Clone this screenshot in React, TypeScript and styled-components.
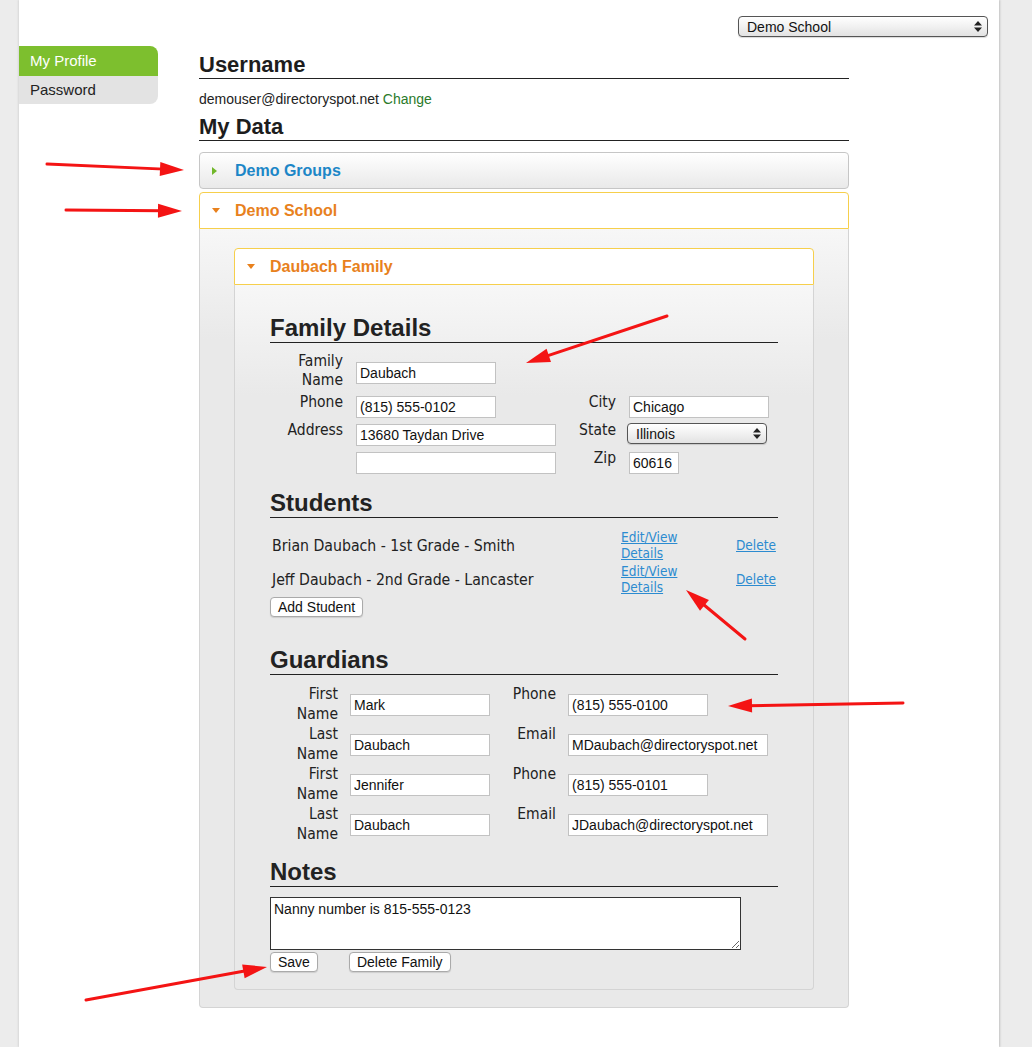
import styled, { createGlobalStyle } from 'styled-components';

const GlobalStyle = createGlobalStyle`
  body {
    margin: 0;
    background: #ececec;
    font-family: "Liberation Sans", Arial, sans-serif;
    color: #222;
  }
`;

const labelFont = `"DejaVu Sans Condensed", "DejaVu Sans", sans-serif`;

// page frame
const Page = styled.div`
  position: relative;
  margin-left: 19px;
  width: 980px;
  min-height: 1047px;
  background: #fff;
  box-shadow: 1px 0 2px rgba(0, 0, 0, 0.18), -1px 0 2px rgba(0, 0, 0, 0.08);
`;

const TopBar = styled.div`
  display: flex;
  justify-content: flex-end;
  box-sizing: border-box;
  height: 46px;
  padding: 16px 11px 0 0;
`;

const SelectWrap = styled.div<{ $width: number }>`
  position: relative;
  width: ${(p) => p.$width}px;
  height: 21px;
`;

const Select = styled.select`
  appearance: none;
  width: 100%;
  height: 100%;
  box-sizing: border-box;
  border: 1px solid #555;
  border-radius: 4px;
  background: linear-gradient(#ffffff, #f1f1f1 50%, #e2e2e2);
  font-family: "Liberation Sans", Arial, sans-serif;
  font-size: 14px;
  color: #111;
  padding: 0 20px 0 8px;
  box-shadow: 0 1px 1px rgba(0, 0, 0, 0.15);
`;

const SelectArrows = styled.svg`
  position: absolute;
  right: 6px;
  top: 5px;
  pointer-events: none;
`;

const Layout = styled.div`
  display: flex;
`;

const SideNav = styled.nav`
  flex: none;
  width: 139px;
  margin-right: 41px;
`;

const NavItem = styled.div<{ $active?: boolean }>`
  height: ${(p) => (p.$active ? 30 : 28)}px;
  line-height: ${(p) => (p.$active ? 30 : 28)}px;
  padding-left: 11px;
  font-size: 15px;
  color: ${(p) => (p.$active ? '#fff' : '#222')};
  background: ${(p) => (p.$active ? '#7dbf2e' : '#e3e3e3')};
  border-radius: ${(p) => (p.$active ? '0 8px 0 0' : '0 0 8px 0')};
`;

const Main = styled.main`
  width: 650px;
  padding-top: 6px;
`;

const PageTitle = styled.h2`
  margin: 0;
  font-size: 22px;
  line-height: 26px;
  font-weight: bold;
  color: #1d1d1d;
  border-bottom: 1px solid #222;
`;

const UserLine = styled.div`
  margin: 11px 0 6px;
  font-size: 14px;
  line-height: 18px;
`;

const GreenLink = styled.a`
  color: #2a7a2a;
  text-decoration: none;
`;

const AccHeader = styled.div<{ $open?: boolean }>`
  display: flex;
  align-items: center;
  box-sizing: border-box;
  height: 37px;
  padding-left: 12px;
  border: 1px solid ${(p) => (p.$open ? '#f6cf4c' : '#c6c6c6')};
  border-radius: ${(p) => (p.$open ? '4px 4px 0 0' : '4px')};
  background: ${(p) => (p.$open ? '#fff' : 'linear-gradient(#ffffff, #f4f4f4 50%, #e9e9e9)')};
  font-size: 16px;
  font-weight: bold;
  color: ${(p) => (p.$open ? '#e8811d' : '#1c86c7')};
  margin-top: ${(p) => (p.$open ? 3 : 11)}px;
`;

const Caret = styled.span`
  display: inline-flex;
  width: 23px;
`;

const AccPanel = styled.div<{ $pad: string }>`
  border: 1px solid #d4d4d4;
  border-top: 0;
  border-radius: 0 0 4px 4px;
  padding: ${(p) => p.$pad};
  background: linear-gradient(#f7f7f7, #e9e9e9 110px, #e9e9e9);
`;

const InnerHeader = styled(AccHeader)`
  margin-top: 0;
`;

const Section = styled.section<{ $gap: number }>`
  margin-top: ${(p) => p.$gap}px;
  &:first-child {
    margin-top: 0;
  }
`;

const SectionTitle = styled.h3`
  margin: 0;
  font-size: 24px;
  line-height: 28px;
  font-weight: bold;
  color: #222;
  border-bottom: 1px solid #222;
`;

const FamilyGrid = styled.div`
  display: grid;
  grid-template-columns: 73px 200px 47px 140px;
  column-gap: 13px;
  row-gap: 3px;
  margin-top: 9px;
`;

const GuardianGrid = styled.div`
  display: grid;
  grid-template-columns: 68px 140px 54px 200px;
  column-gap: 12px;
  grid-auto-rows: 40px;
  margin-top: 9px;
`;

const Label = styled.label<{ $lh: number }>`
  font-family: ${labelFont};
  font-stretch: condensed;
  font-size: 15.5px;
  line-height: ${(p) => p.$lh}px;
  color: #222;
  text-align: right;
`;

const TextInput = styled.input<{ $w: number; $top: number }>`
  display: block;
  box-sizing: border-box;
  width: ${(p) => p.$w}px;
  height: 22px;
  margin-top: ${(p) => p.$top}px;
  padding: 0 3px;
  border: 1px solid #c2c2c2;
  background: #fff;
  font-family: "Liberation Sans", Arial, sans-serif;
  font-size: 14px;
  color: #111;
`;

const StudentList = styled.div`
  display: grid;
  grid-template-columns: 351px 115px auto;
  grid-auto-rows: 32px;
  row-gap: 2px;
  align-items: center;
  margin-top: 11px;
`;

const StudentName = styled.span`
  padding-left: 2px;
  font-family: ${labelFont};
  font-stretch: condensed;
  font-size: 15.7px;
  color: #222;
`;

const BlueLink = styled.a<{ $w?: number }>`
  display: block;
  width: ${(p) => (p.$w ? `${p.$w}px` : 'auto')};
  font-family: ${labelFont};
  font-stretch: condensed;
  font-size: 13.5px;
  line-height: 16px;
  color: #2c8bd0;
  text-decoration: underline;
`;

const Button = styled.button`
  height: 20px;
  padding: 0 7px;
  border: 1px solid #aaa;
  border-radius: 4px;
  background: #fff;
  font-family: "Liberation Sans", Arial, sans-serif;
  font-size: 14px;
  color: #111;
  box-shadow: 0 1px 1px rgba(0, 0, 0, 0.12);
`;

const AddButton = styled(Button)`
  display: block;
  margin-top: 2px;
`;

const NotesArea = styled.textarea`
  display: block;
  box-sizing: border-box;
  width: 471px;
  height: 53px;
  margin-top: 10px;
  padding: 3px 3px;
  border: 1px solid #333;
  font-family: "Liberation Sans", Arial, sans-serif;
  font-size: 14px;
  color: #111;
`;

const ButtonRow = styled.div`
  display: flex;
  gap: 31px;
  margin-top: 2px;
`;

const Overlay = styled.svg`
  position: absolute;
  left: -19px;
  top: 0;
  pointer-events: none;
`;

function Arrow({ x1, y1, x2, y2 }: { x1: number; y1: number; x2: number; y2: number }) {
  const dx = x2 - x1;
  const dy = y2 - y1;
  const len = Math.hypot(dx, dy);
  const ux = dx / len;
  const uy = dy / len;
  const bx = x2 - ux * 24;
  const by = y2 - uy * 24;
  const nx = -uy * 7;
  const ny = ux * 7;
  return (
    <g fill="#f41414" stroke="#f41414">
      <line x1={x1} y1={y1} x2={bx + ux * 4} y2={by + uy * 4} strokeWidth={3} strokeLinecap="round" />
      <polygon points={`${x2},${y2} ${bx + nx},${by + ny} ${bx - nx},${by - ny}`} strokeWidth={0} />
    </g>
  );
}

const arrows = [
  { x1: 47, y1: 164, x2: 184, y2: 170 },
  { x1: 66, y1: 210, x2: 182, y2: 211 },
  { x1: 667, y1: 316, x2: 526, y2: 363 },
  { x1: 745, y1: 639, x2: 686, y2: 590 },
  { x1: 903, y1: 703, x2: 728, y2: 706 },
  { x1: 86, y1: 1000, x2: 267, y2: 967 },
];

function UpDown() {
  return (
    <SelectArrows width="8" height="11" viewBox="0 0 8 11">
      <path d="M4 0 L8 4.5 H0 Z M0 6.5 H8 L4 11 Z" fill="#222" />
    </SelectArrows>
  );
}

function Triangle({ open }: { open?: boolean }) {
  return open ? (
    <svg width="8" height="6" viewBox="0 0 8 6">
      <path d="M0 0 H8 L4 5 Z" fill="#e8811d" />
    </svg>
  ) : (
    <svg width="6" height="8" viewBox="0 0 6 8">
      <path d="M0 0 L5 4 L0 8 Z" fill="#71b72a" />
    </svg>
  );
}

const guardians = [
  { first: 'Mark', last: 'Daubach', phone: '(815) 555-0100', email: 'MDaubach@directoryspot.net' },
  { first: 'Jennifer', last: 'Daubach', phone: '(815) 555-0101', email: 'JDaubach@directoryspot.net' },
];

const students = ['Brian Daubach - 1st Grade - Smith', 'Jeff Daubach - 2nd Grade - Lancaster'];

export default function App() {
  return (
    <>
      <GlobalStyle />
      <Page>
        <TopBar>
          <SelectWrap $width={250}>
            <Select defaultValue="demo">
              <option value="demo">Demo School</option>
            </Select>
            <UpDown />
          </SelectWrap>
        </TopBar>
        <Layout>
          <SideNav>
            <NavItem $active>My Profile</NavItem>
            <NavItem>Password</NavItem>
          </SideNav>
          <Main>
            <PageTitle>Username</PageTitle>
            <UserLine>
              demouser@directoryspot.net <GreenLink href="#">Change</GreenLink>
            </UserLine>
            <PageTitle>My Data</PageTitle>

            <AccHeader>
              <Caret>
                <Triangle />
              </Caret>
              Demo Groups
            </AccHeader>
            <AccHeader $open>
              <Caret>
                <Triangle open />
              </Caret>
              Demo School
            </AccHeader>
            <AccPanel $pad="19px 34px 17px">
              <InnerHeader $open>
                <Caret>
                  <Triangle open />
                </Caret>
                Daubach Family
              </InnerHeader>
              <AccPanel $pad="29px 35px 17px">
                <Section $gap={0}>
                  <SectionTitle>Family Details</SectionTitle>
                  <FamilyGrid>
                    <Label $lh={19}>
                      Family
                      <br />
                      Name
                    </Label>
                    <TextInput $w={140} $top={10} defaultValue="Daubach" />
                    <span />
                    <span />

                    <Label $lh={19}>Phone</Label>
                    <TextInput $w={140} $top={3} defaultValue="(815) 555-0102" />
                    <Label $lh={19}>City</Label>
                    <TextInput $w={140} $top={3} defaultValue="Chicago" />

                    <Label $lh={19}>Address</Label>
                    <TextInput $w={200} $top={3} defaultValue="13680 Taydan Drive" />
                    <Label $lh={19}>State</Label>
                    <SelectWrap $width={140} style={{ marginTop: 2, marginLeft: -2 }}>
                      <Select defaultValue="IL">
                        <option value="IL">Illinois</option>
                      </Select>
                      <UpDown />
                    </SelectWrap>

                    <span />
                    <TextInput $w={200} $top={3} defaultValue="" />
                    <Label $lh={19}>Zip</Label>
                    <TextInput $w={50} $top={3} defaultValue="60616" />
                  </FamilyGrid>
                </Section>

                <Section $gap={15}>
                  <SectionTitle>Students</SectionTitle>
                  <StudentList>
                    {students.map((s) => (
                      <>
                        <StudentName key={s}>{s}</StudentName>
                        <BlueLink href="#" $w={62}>
                          Edit/View Details
                        </BlueLink>
                        <BlueLink href="#">Delete</BlueLink>
                      </>
                    ))}
                  </StudentList>
                  <AddButton>Add Student</AddButton>
                </Section>

                <Section $gap={29}>
                  <SectionTitle>Guardians</SectionTitle>
                  <GuardianGrid>
                    {guardians.map((g) => (
                      <>
                        <Label $lh={20}>
                          First
                          <br />
                          Name
                        </Label>
                        <TextInput $w={140} $top={10} defaultValue={g.first} />
                        <Label $lh={20}>Phone</Label>
                        <TextInput $w={140} $top={10} defaultValue={g.phone} />
                        <Label $lh={20}>
                          Last
                          <br />
                          Name
                        </Label>
                        <TextInput $w={140} $top={10} defaultValue={g.last} />
                        <Label $lh={20}>Email</Label>
                        <TextInput $w={200} $top={10} defaultValue={g.email} />
                      </>
                    ))}
                  </GuardianGrid>
                </Section>

                <Section $gap={14}>
                  <SectionTitle>Notes</SectionTitle>
                  <NotesArea defaultValue="Nanny number is 815-555-0123" />
                  <ButtonRow>
                    <Button>Save</Button>
                    <Button>Delete Family</Button>
                  </ButtonRow>
                </Section>
              </AccPanel>
            </AccPanel>
          </Main>
        </Layout>
        <Overlay width="1032" height="1047" viewBox="0 0 1032 1047">
          {arrows.map((a, i) => (
            <Arrow key={i} {...a} />
          ))}
        </Overlay>
      </Page>
    </>
  );
}
